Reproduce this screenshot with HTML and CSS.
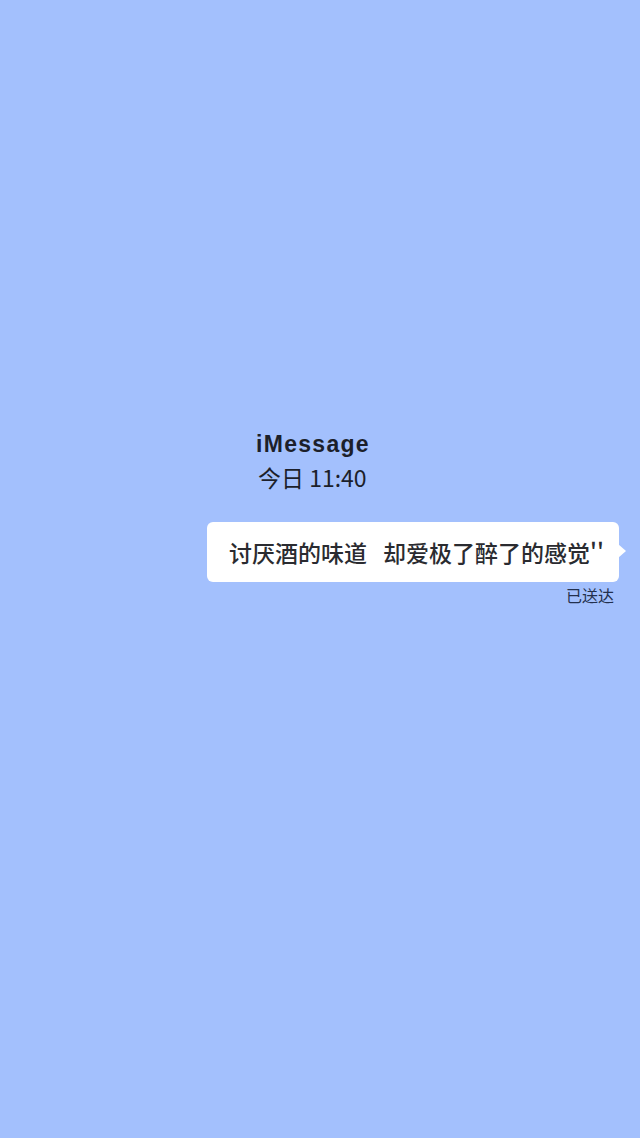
FILE: index.html
```html
<!DOCTYPE html>
<html lang="zh">
<head>
<meta charset="utf-8">
<link rel="stylesheet" href="styles.css">
</head>
<body>
<div class="screen">
  <div class="header">
    <div class="service">iMessage</div>
    <div class="time">今日 11:40</div>
  </div>
  <div class="row">
    <div class="bubble">讨厌酒的味道<span class="gap"></span>却爱极了醉了的感觉''</div>
  </div>
  <div class="status">已送达</div>
</div>
</body>
</html>
```
FILE: styles.css
```css
html, body {
  margin: 0;
  padding: 0;
  background: #a3c0fd;
}
.screen {
  width: 640px;
  height: 1138px;
  background: #a3c0fd;
  font-family: "Noto Sans CJK SC", "Liberation Sans", sans-serif;
  display: flex;
  flex-direction: column;
  padding-top: 428px;
  box-sizing: border-box;
}
.header {
  margin-left: 256px;
  color: #1c1f2a;
}
.service {
  font-family: "Liberation Sans", "Noto Sans CJK SC", sans-serif;
  font-size: 23px;
  font-weight: 600;
  letter-spacing: 1.3px;
  line-height: 32px;
}
.time {
  font-size: 23px;
  line-height: 34px;
  margin-left: 2px;
}
.row {
  display: flex;
  justify-content: flex-end;
  margin-top: 28px;
  padding-right: 21px;
}
.bubble {
  position: relative;
  background: #ffffff;
  border-radius: 6px;
  width: 412px;
  height: 60px;
  box-sizing: border-box;
  padding-left: 22px;
  font-size: 23px;
  font-weight: 500;
  line-height: 60px;
  color: #2a2b30;
  white-space: nowrap;
}
.gap {
  display: inline-block;
  width: 16px;
}
.bubble::after {
  content: "";
  position: absolute;
  right: -7px;
  top: 22px;
  border-left: 8px solid #ffffff;
  border-top: 7px solid transparent;
  border-bottom: 7px solid transparent;
}
.status {
  align-self: flex-end;
  margin-right: 26px;
  margin-top: 2px;
  font-size: 16px;
  line-height: 22px;
  color: #23304d;
}
```
